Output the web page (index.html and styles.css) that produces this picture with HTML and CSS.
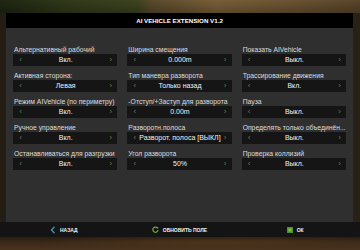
FILE: index.html
```html
<!DOCTYPE html>
<html lang="ru">
<head>
<meta charset="utf-8">
<title>AI Vehicle Extension</title>
<link rel="stylesheet" href="styles.css">
</head>
<body>
<div class="scene">
  <div class="top-strip"></div>
  <div class="panel">
    <div class="title">AI VEHICLE EXTENSION V1.2</div>
    <div class="content">
      <div class="cell"><div class="label">Альтернативный рабочий</div><div class="sel"><span class="arr">‹</span><span class="val">Вкл.</span><span class="arr">›</span></div></div>
      <div class="cell"><div class="label">Ширина смещения</div><div class="sel"><span class="arr">‹</span><span class="val">0.000m</span><span class="arr">›</span></div></div>
      <div class="cell"><div class="label">Показать AIVehicle</div><div class="sel"><span class="arr">‹</span><span class="val">Выкл.</span><span class="arr">›</span></div></div>

      <div class="cell"><div class="label">Активная сторона:</div><div class="sel"><span class="arr">‹</span><span class="val">Левая</span><span class="arr">›</span></div></div>
      <div class="cell"><div class="label">Тип маневра разворота</div><div class="sel"><span class="arr">‹</span><span class="val">Только назад</span><span class="arr">›</span></div></div>
      <div class="cell"><div class="label">Трасcирование движения</div><div class="sel"><span class="arr">‹</span><span class="val">Вкл.</span><span class="arr">›</span></div></div>

      <div class="cell"><div class="label">Режим AIVehicle (по периметру)</div><div class="sel"><span class="arr">‹</span><span class="val">Вкл.</span><span class="arr">›</span></div></div>
      <div class="cell"><div class="label">-Отступ/+Заступ для разворота</div><div class="sel"><span class="arr">‹</span><span class="val">0.00m</span><span class="arr">›</span></div></div>
      <div class="cell"><div class="label">Пауза</div><div class="sel"><span class="arr">‹</span><span class="val">Выкл.</span><span class="arr">›</span></div></div>

      <div class="cell"><div class="label">Ручное управление</div><div class="sel"><span class="arr">‹</span><span class="val">Вкл.</span><span class="arr">›</span></div></div>
      <div class="cell"><div class="label">Разворотн.полоса</div><div class="sel"><span class="arr">‹</span><span class="val">Разворот. полоса [ВЫКЛ]</span><span class="arr">›</span></div></div>
      <div class="cell"><div class="label">Определять только объединён...</div><div class="sel"><span class="arr">‹</span><span class="val">Выкл.</span><span class="arr">›</span></div></div>

      <div class="cell"><div class="label">Останавливаться для разгрузки</div><div class="sel"><span class="arr">‹</span><span class="val">Вкл.</span><span class="arr">›</span></div></div>
      <div class="cell"><div class="label">Угол разворота</div><div class="sel"><span class="arr">‹</span><span class="val">50%</span><span class="arr">›</span></div></div>
      <div class="cell"><div class="label">Проверка коллизий</div><div class="sel"><span class="arr">‹</span><span class="val">Выкл.</span><span class="arr">›</span></div></div>
    </div>
  </div>
  <div class="footer">
    <div class="btn"><svg class="ico" width="6" height="8" viewBox="0 0 6 8"><path d="M4.5 0.8 L1.5 4 L4.5 7.2" fill="none" stroke="#3f8fa8" stroke-width="1.4"/></svg><span>НАЗАД</span></div>
    <div class="btn"><svg class="ico" width="7" height="7" viewBox="0 0 7 7"><path d="M5.6 2.2 A2.6 2.6 0 1 0 6 4.2" fill="none" stroke="#6fb23a" stroke-width="1.2"/><path d="M4.2 1.2 L6.2 1 L6 3 Z" fill="#6fb23a"/></svg><span>ОБНОВИТЬ ПОЛЕ</span></div>
    <div class="btn"><svg class="ico" width="6" height="6" viewBox="0 0 6 6"><rect x="0" y="0" width="6" height="6" fill="#4f8f2a"/><rect x="1.5" y="1.5" width="3" height="3" fill="#7cc24a"/></svg><span>ОК</span></div>
  </div>
  <div class="ground"></div>
</div>
</body>
</html>
```
FILE: styles.css
```css
html, body {
  margin: 0;
  padding: 0;
}
body {
  width: 360px;
  height: 250px;
  overflow: hidden;
  font-family: "Liberation Sans", Arial, sans-serif;
  background: linear-gradient(90deg, #241d14 0%, #1c1710 50%, #2a2116 100%);
}
.scene {
  display: flex;
  flex-direction: column;
  width: 360px;
  height: 250px;
}
.top-strip {
  height: 13px;
  background:
    linear-gradient(180deg, rgba(0,0,0,0) 0%, rgba(0,0,0,0.25) 100%),
    linear-gradient(90deg, #1f2612 0%, #323b1a 20%, #3e4420 38%, #5a4a2c 42%, #7a6038 60%, #6d5533 80%, #5a462a 100%);
}
.panel {
  margin: 0 7px 0 6px;
  display: flex;
  flex-direction: column;
}
.title {
  height: 15px;
  background: #000;
  color: #fff;
  font-weight: bold;
  font-size: 6.2px;
  line-height: 15px;
  text-align: center;
}
.content {
  height: 194px;
  box-sizing: border-box;
  background: #2f2f2f;
  padding: 17px 7px 0 7px;
  display: grid;
  grid-template-columns: repeat(3, 1fr);
  column-gap: 10px;
  row-gap: 5px;
  align-content: start;
}
.cell {
  display: flex;
  flex-direction: column;
  min-width: 0;
}
.label {
  height: 9px;
  font-size: 6.8px;
  line-height: 9px;
  color: #dcdcdc;
  padding-left: 1px;
  white-space: nowrap;
  overflow: hidden;
  text-overflow: ellipsis;
}
.sel {
  height: 12px;
  background: #151515;
  display: flex;
  align-items: center;
  justify-content: space-between;
  padding: 0 4px 0 5px;
}
.arr {
  color: #6b7a4c;
  font-size: 8px;
  line-height: 12px;
  width: 5px;
  text-align: center;
}
.val {
  color: #f2f2f2;
  font-size: 7px;
  line-height: 12px;
  white-space: nowrap;
}
.footer {
  height: 15px;
  background: #141414;
  padding: 0 7px 0 6px;
  display: grid;
  grid-template-columns: repeat(3, 1fr);
  align-items: center;
}
.btn {
  display: flex;
  align-items: center;
  justify-content: center;
  gap: 4px;
  color: #f0f0f0;
  font-weight: bold;
  font-size: 5px;
  line-height: 8px;
}
.ico {
  display: block;
}
.ground {
  flex: 1;
  background:
    radial-gradient(ellipse at 60% 40%, rgba(90,60,30,0.6) 0%, rgba(0,0,0,0) 60%),
    linear-gradient(180deg, #2a1e12 0%, #3c2a18 50%, #4a3420 100%);
}
```
